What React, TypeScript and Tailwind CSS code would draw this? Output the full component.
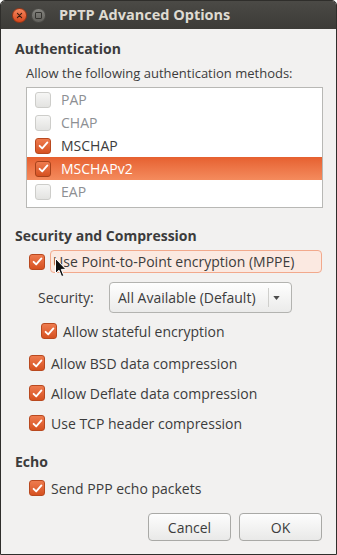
import React from "react";

function Box({ checked, selected }: { checked: boolean; selected?: boolean }) {
  if (!checked) {
    return (
      <span className="block h-4 w-4 shrink-0 rounded-[3px] border border-[#cdcdca] bg-linear-to-b from-[#f6f6f5] to-[#e3e3e1]" />
    );
  }
  return (
    <span
      className={
        "flex h-4 w-4 shrink-0 items-center justify-center rounded-[3px] border bg-linear-to-b from-[#ee7b4e] to-[#d6511f] " +
        (selected ? "border-[#a8421b]" : "border-[#b9491f]")
      }
    >
      <svg viewBox="0 0 16 16" className="h-[13px] w-[13px]">
        <path
          d="M3.2 8.4 L6.4 11.6 L12.8 4.2"
          fill="none"
          stroke="white"
          strokeWidth="2.3"
          strokeLinecap="round"
          strokeLinejoin="round"
        />
      </svg>
    </span>
  );
}

const methods = [
  { name: "PAP", on: false },
  { name: "CHAP", on: false },
  { name: "MSCHAP", on: true },
  { name: "MSCHAPv2", on: true, sel: true },
  { name: "EAP", on: false },
];

function Row({ label, ml }: { label: string; ml: string }) {
  return (
    <div className={"flex h-[18px] items-center gap-[6px] " + ml}>
      <Box checked />
      <span>{label}</span>
    </div>
  );
}

export default function App() {
  return (
    <div className="relative flex h-[555px] w-[337px] flex-col overflow-hidden rounded-t-[5px] border border-[#2f2e2b] bg-[#f2f1f0] font-['Open_Sans',sans-serif] text-[14px] text-[#3c3c3c]">
      {/* title bar */}
      <div className="flex h-[28px] shrink-0 items-center bg-linear-to-b from-[#4b4a46] to-[#3c3b37] pl-[11px]">
        <span className="flex h-[15px] w-[15px] items-center justify-center rounded-full border border-[#9b3514] bg-linear-to-b from-[#f5865c] to-[#d6461a]">
          <svg viewBox="0 0 10 10" className="h-[7px] w-[7px]">
            <path d="M2 2 L8 8 M8 2 L2 8" stroke="#3a1d10" strokeWidth="1.6" strokeLinecap="round" />
          </svg>
        </span>
        <span className="ml-[4px] flex h-[15px] w-[15px] items-center justify-center rounded-full border border-[#4a4945] bg-linear-to-b from-[#85847f] to-[#62615c]">
          <span className="h-[7px] w-[7px] rounded-[1px] border-[1.5px] border-[#34332f]" />
        </span>
        <span className="ml-[13px] text-[14.5px] font-bold text-[#dfdbd2]">PPTP Advanced Options</span>
      </div>

      <div className="flex flex-1 flex-col pl-[14px] pr-[14px] pt-[11px]">
        <div className="text-[14px] font-bold leading-[18px]">Authentication</div>
        <div className="ml-[11px] mt-[6px] whitespace-nowrap text-[13px] leading-[18px]">
          Allow the following authentication methods:
        </div>

        <div className="ml-[11px] mt-[5px] h-[121px] w-[297px] border border-[#b8b8b5] bg-white">
          {methods.map((m) => (
            <div
              key={m.name}
              className={
                "flex h-[23px] items-center gap-[10px] pl-[8px] " +
                (m.sel ? "bg-linear-to-b from-[#e6602f] to-[#f48b5d] text-white" : m.on ? "" : "text-[#8d8f93]")
              }
            >
              <Box checked={m.on} selected={m.sel} />
              <span>{m.name}</span>
            </div>
          ))}
        </div>

        <div className="mt-[19px] text-[14px] font-bold leading-[18px]">Security and Compression</div>

        <div className="ml-[14px] mt-[5px] flex h-[23px] items-center gap-[5px]">
          <Box checked />
          <span className="flex h-[23px] w-[273px] items-center whitespace-nowrap rounded-[4px] border border-[#f2a98c] bg-[#fbe9e1] pl-[2px]">
            Use Point-to-Point encryption (MPPE)
          </span>
        </div>

        <div className="ml-[23px] mt-[9px] flex h-[31px] items-center">
          <span className="w-[71px]">Security:</span>
          <div className="flex h-[31px] w-[183px] items-center rounded-[4px] border border-[#b3b3b0] bg-linear-to-b from-[#fefefe] to-[#ebebea] pl-[8px]">
            <span className="w-[150px] whitespace-nowrap">All Available (Default)</span>
            <span className="h-[19px] w-px bg-[#cfcfcc]" />
            <svg viewBox="0 0 8 5" className="ml-[4px] h-[4px] w-[7px]">
              <path d="M0 0 L8 0 L4 5 Z" fill="#4c4c4c" />
            </svg>
          </div>
        </div>

        <div className="mt-[9px]">
          <Row label="Allow stateful encryption" ml="ml-[26px]" />
        </div>
        <div className="mt-[14px]">
          <Row label="Allow BSD data compression" ml="ml-[14px]" />
        </div>
        <div className="mt-[12px]">
          <Row label="Allow Deflate data compression" ml="ml-[14px]" />
        </div>
        <div className="mt-[12px]">
          <Row label="Use TCP header compression" ml="ml-[14px]" />
        </div>

        <div className="mt-[21px] text-[14px] font-bold leading-[18px]">Echo</div>
        <div className="mt-[8px]">
          <Row label="Send PPP echo packets" ml="ml-[14px]" />
        </div>

        <div className="mt-[16px] flex justify-end gap-[8px]">
          <button className="h-[28px] w-[83px] rounded-[4px] border border-[#a9a9a6] bg-linear-to-b from-[#fdfdfd] to-[#e9e9e8] text-[#3c3c3c]">
            Cancel
          </button>
          <button className="h-[28px] w-[83px] rounded-[4px] border border-[#a9a9a6] bg-linear-to-b from-[#fdfdfd] to-[#e9e9e8] text-[#3c3c3c]">
            OK
          </button>
        </div>
      </div>

      {/* mouse pointer over the MPPE label */}
      <svg viewBox="0 0 12 20" className="absolute left-[54px] top-[257px] h-[20px] w-[12px]">
        <path d="M0.5 0.5 L0.5 15.5 L4 12.2 L6.6 18.6 L8.8 17.7 L6.3 11.4 L11 11.4 Z" fill="#111" stroke="white" strokeWidth="1" strokeLinejoin="round" />
      </svg>
    </div>
  );
}
